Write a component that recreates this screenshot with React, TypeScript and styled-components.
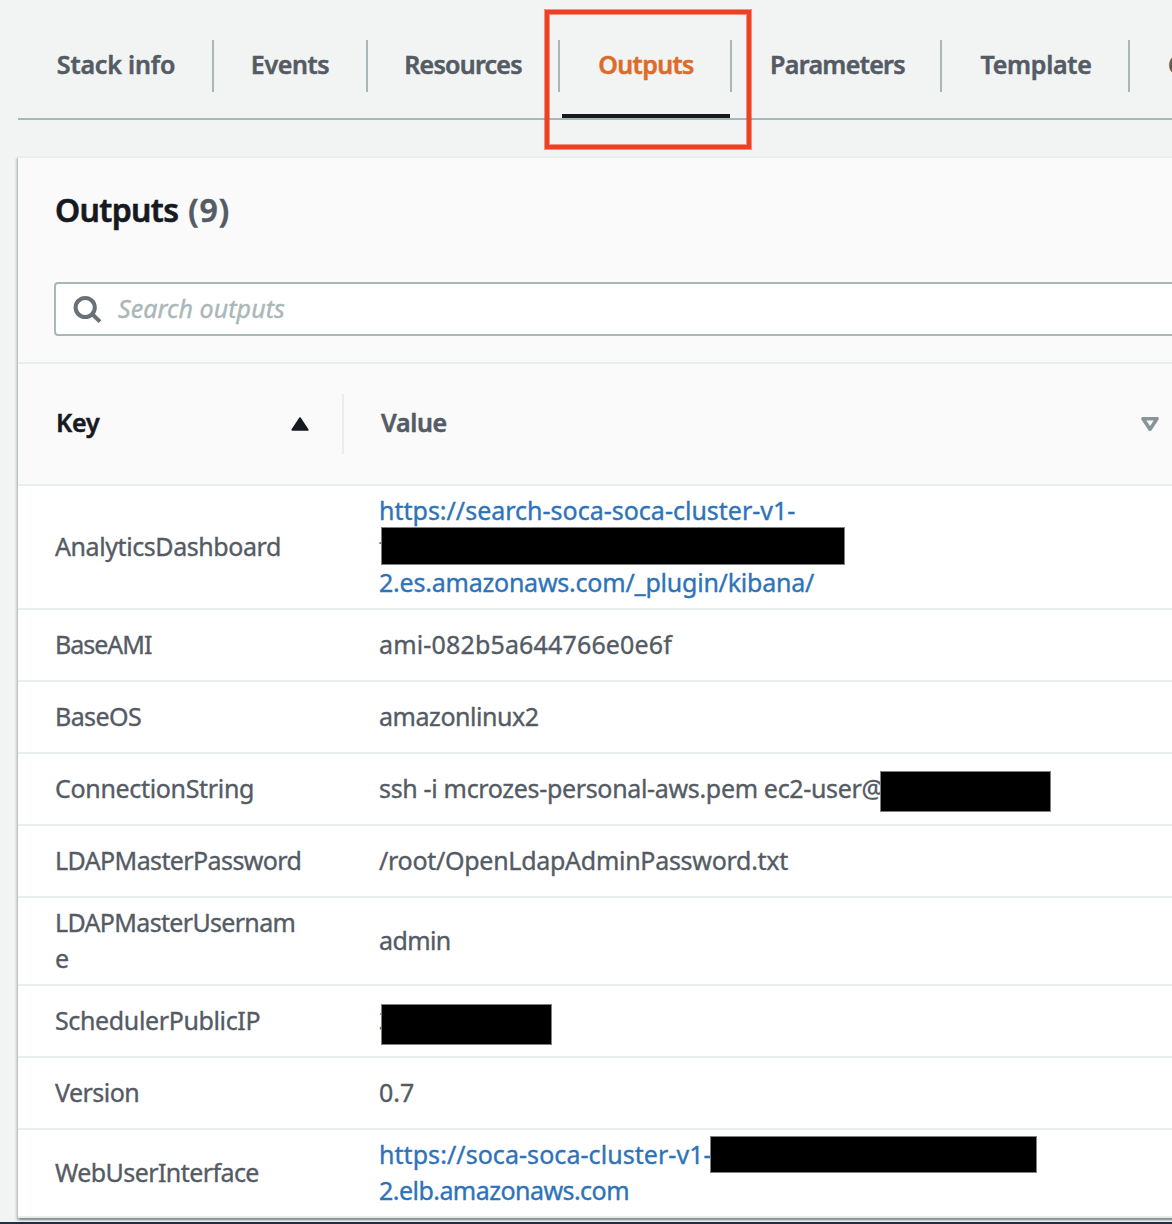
import React from "react";
import styled, { createGlobalStyle, css } from "styled-components";

const color = {
  page: "#f2f4f3",
  head: "#fafafa",
  divider: "#eaeded",
  border: "#aab7b8",
  text: "#545b64",
  ink: "#16191f",
  link: "#2e73b8",
  accent: "#dd6b2a",
  footer: "#232f3e",
};

const GlobalStyle = createGlobalStyle`
  * { box-sizing: border-box; }
  body {
    margin: 0;
    overflow: hidden;
    background: ${color.page};
    color: ${color.text};
    font-family: "Noto Sans", "Open Sans", sans-serif;
    font-size: 25px;
    line-height: 36px;
  }
`;

const Page = styled.div`
  width: 1172px;
  height: 1224px;
  display: flex;
  flex-direction: column;
  overflow: hidden;
`;

const Tabs = styled.nav`
  flex: none;
  display: flex;
  height: 120px;
  margin-left: 18px;
  padding-top: 40px;
  border-bottom: 2px solid ${color.border};
`;

const Tab = styled.div<{ $width: number; $shift?: number; $active?: boolean }>`
  flex: none;
  position: relative;
  display: flex;
  justify-content: center;
  width: ${(p) => p.$width}px;
  height: 52px;
  padding: 6px 0 0 ${(p) => p.$shift ?? 2}px;
  border-right: 2px solid ${color.border};
  font-weight: 600;
  -webkit-text-stroke: 0.5px currentColor;
  color: ${(p) => (p.$active ? color.accent : color.text)};

  &:last-child {
    justify-content: flex-start;
    padding-left: 38px;
  }

  ${(p) =>
    p.$active &&
    css`
      &::before {
        content: "";
        position: absolute;
        left: 2px;
        right: 0;
        top: 74px;
        height: 4px;
        background: ${color.ink};
      }
    `}
`;

const Highlight = styled.div`
  position: absolute;
  left: -15px;
  top: -30px;
  width: 206px;
  height: 139px;
  border: 4px solid #ee4023;
  box-shadow: 0 0 0 1px rgba(238, 64, 35, 0.55), inset 0 0 0 1px rgba(238, 64, 35, 0.55);
`;

const Text = styled.span<{ $spacing?: number }>`
  white-space: pre;
  letter-spacing: ${(p) => p.$spacing ?? 0}px;
`;

const Card = styled.section`
  flex: none;
  width: 1240px;
  margin: 36px 0 0 18px;
  border-top: 2px solid ${color.divider};
  background: #fff;
  box-shadow: 0 2px 2px rgba(0, 28, 36, 0.3), 2px 2px 2px rgba(0, 28, 36, 0.15),
    -2px 2px 2px rgba(0, 28, 36, 0.15);
`;

const CardHeader = styled.header`
  height: 206px;
  padding: 30px 0 0 36px;
  background: ${color.head};
  border-bottom: 2px solid ${color.divider};
`;

const Title = styled.h1`
  display: flex;
  gap: 10px;
  margin: 0 0 50px;
  padding-left: 1px;
  font-size: 32px;
  font-weight: 600;
  line-height: 44px;
  color: ${color.ink};
  -webkit-text-stroke: 0.6px currentColor;
`;

const Count = styled.span`
  color: ${color.text};
  letter-spacing: 0.9px;
`;

const SearchBox = styled.div`
  display: flex;
  align-items: center;
  gap: 15px;
  height: 54px;
  padding-left: 17px;
  background: #fff;
  border: 2px solid ${color.border};
  border-radius: 4px;
  color: ${color.border};
  font-style: italic;
  -webkit-text-stroke: 0.4px currentColor;

  svg {
    flex: none;
    display: block;
  }
`;

const Placeholder = styled.div`
  padding-bottom: 2px;
`;

const HeadRow = styled.div`
  display: flex;
  align-items: center;
  height: 122px;
  background: ${color.head};
  border-bottom: 2px solid ${color.divider};
  font-weight: 600;
  -webkit-text-stroke: 0.5px currentColor;
`;

const HeadCell = styled.div<{ $width: number; $indent: number; $sorted?: boolean }>`
  flex: none;
  display: flex;
  align-items: center;
  justify-content: space-between;
  width: ${(p) => p.$width}px;
  height: 60px;
  padding: 0 33px 4px ${(p) => p.$indent}px;
  border-right: 2px solid ${color.divider};
  color: ${(p) => (p.$sorted ? color.ink : color.text)};

  svg {
    position: relative;
    top: 2px;
  }
`;

const Row = styled.div`
  display: flex;
  align-items: center;
  min-height: 72px;
  padding: 6px 0 8px;
  border-bottom: 2px solid ${color.divider};
  -webkit-text-stroke: 0.35px currentColor;
`;

const Cell = styled.div<{ $width?: number; $link?: boolean }>`
  display: flex;
  flex-direction: column;
  width: ${(p) => (p.$width ? p.$width + "px" : "auto")};
  padding-left: 37px;
  color: ${(p) => (p.$link ? color.link : color.text)};
`;

const Line = styled.div`
  position: relative;
  height: 36px;
`;

const Redaction = styled.span<{ $x: number; $y: number; $w: number; $h: number }>`
  position: absolute;
  left: ${(p) => p.$x}px;
  top: ${(p) => p.$y}px;
  width: ${(p) => p.$w}px;
  height: ${(p) => p.$h}px;
  background: #000;
  border: 1px solid #808080;
`;

const Footer = styled.footer`
  flex: none;
  height: 2px;
  margin-top: 4px;
  background: ${color.footer};
`;

type Piece = { text: string; spacing?: number; cover?: [number, number, number, number] };
type Output = { key: Piece[]; value: Piece[]; link?: boolean };

const tabs = [
  { label: "Stack info", width: 196, spacing: -0.16 },
  { label: "Events", width: 154, spacing: -0.39, shift: 0 },
  { label: "Resources", width: 192, spacing: -0.76, shift: 0 },
  { label: "Outputs", width: 172, spacing: -0.62, active: true },
  { label: "Parameters", width: 210, spacing: -0.66, shift: 3 },
  { label: "Template", width: 188, spacing: -0.28 },
  { label: "Change sets", width: 210, spacing: -0.5 },
];

const outputs: Output[] = [
  {
    key: [{ text: "AnalyticsDashboard", spacing: -0.42 }],
    value: [
      { text: "https://search-soca-soca-cluster-v1-" },
      { text: "f", cover: [2, -1, 464, 38] },
      { text: "2.es.amazonaws.com/_plugin/kibana/", spacing: -0.22 },
    ],
    link: true,
  },
  {
    key: [{ text: "BaseAMI", spacing: -1 }],
    value: [{ text: "ami-082b5a644766e0e6f", spacing: 0.16 }],
  },
  {
    key: [{ text: "BaseOS", spacing: -0.6 }],
    value: [{ text: "amazonlinux2", spacing: -0.45 }],
  },
  {
    key: [{ text: "ConnectionString", spacing: -0.33 }],
    value: [
      {
        text: "ssh -i mcrozes-personal-aws.pem ec2-user@",
        spacing: -0.33,
        cover: [501, 1, 171, 41],
      },
    ],
  },
  {
    key: [{ text: "LDAPMasterPassword", spacing: -0.6 }],
    value: [{ text: "/root/OpenLdapAdminPassword.txt", spacing: -0.28 }],
  },
  {
    key: [{ text: "LDAPMasterUsernam", spacing: -0.67 }, { text: "e" }],
    value: [{ text: "admin", spacing: -0.6 }],
  },
  {
    key: [{ text: "SchedulerPublicIP", spacing: -0.37 }],
    value: [{ text: "3", cover: [2, 2, 171, 41] }],
  },
  {
    key: [{ text: "Version", spacing: -0.52 }],
    value: [{ text: "0.7" }],
  },
  {
    key: [{ text: "WebUserInterface", spacing: -0.57 }],
    value: [
      { text: "https://soca-soca-cluster-v1-", spacing: 0.06, cover: [331, 0, 327, 37] },
      { text: "2.elb.amazonaws.com", spacing: -0.54 },
    ],
    link: true,
  },
];

const SearchIcon = () => (
  <svg width="30" height="30" viewBox="0 0 30 30" fill="none" stroke="#687078" strokeWidth="4">
    <circle cx="12.2" cy="13.5" r="9.6" />
    <path d="M18.8 19.8 27 27.6" />
  </svg>
);

const SortedIcon = () => (
  <svg width="18" height="14" viewBox="0 0 18 14">
    <path d="M9 1.2 16.6 12.8H1.4Z" fill={color.ink} stroke={color.ink} strokeWidth="2" strokeLinejoin="round" />
  </svg>
);

const SortableIcon = () => (
  <svg width="18" height="14" viewBox="0 0 18 14">
    <path d="M2 1.7H16L9 12.2Z" fill="none" stroke="#879596" strokeWidth="3.6" strokeLinejoin="round" />
  </svg>
);

const Lines = ({ pieces }: { pieces: Piece[] }) => (
  <>
    {pieces.map((piece) => (
      <Line key={piece.text}>
        <Text $spacing={piece.spacing}>{piece.text}</Text>
        {piece.cover && (
          <Redaction $x={piece.cover[0]} $y={piece.cover[1]} $w={piece.cover[2]} $h={piece.cover[3]} />
        )}
      </Line>
    ))}
  </>
);

export default function App() {
  return (
    <Page>
      <GlobalStyle />
      <Tabs>
        {tabs.map((tab) => (
          <Tab key={tab.label} $width={tab.width} $shift={tab.shift} $active={tab.active}>
            <Text $spacing={tab.spacing}>{tab.label}</Text>
            {tab.active && <Highlight />}
          </Tab>
        ))}
      </Tabs>
      <Card>
        <CardHeader>
          <Title>
            <Text $spacing={-0.65}>Outputs</Text>
            <Count>(9)</Count>
          </Title>
          <SearchBox>
            <SearchIcon />
            <Placeholder>
              <Text $spacing={0.07}>Search outputs</Text>
            </Placeholder>
          </SearchBox>
        </CardHeader>
        <HeadRow>
          <HeadCell $width={326} $indent={38} $sorted>
            <Text $spacing={-0.1}>Key</Text>
            <SortedIcon />
          </HeadCell>
          <HeadCell $width={850} $indent={37}>
            <Text $spacing={-0.35}>Value</Text>
            <SortableIcon />
          </HeadCell>
        </HeadRow>
        {outputs.map((output) => (
          <Row key={output.key[0].text}>
            <Cell $width={324}>
              <Lines pieces={output.key} />
            </Cell>
            <Cell $link={output.link}>
              <Lines pieces={output.value} />
            </Cell>
          </Row>
        ))}
      </Card>
      <Footer />
    </Page>
  );
}
